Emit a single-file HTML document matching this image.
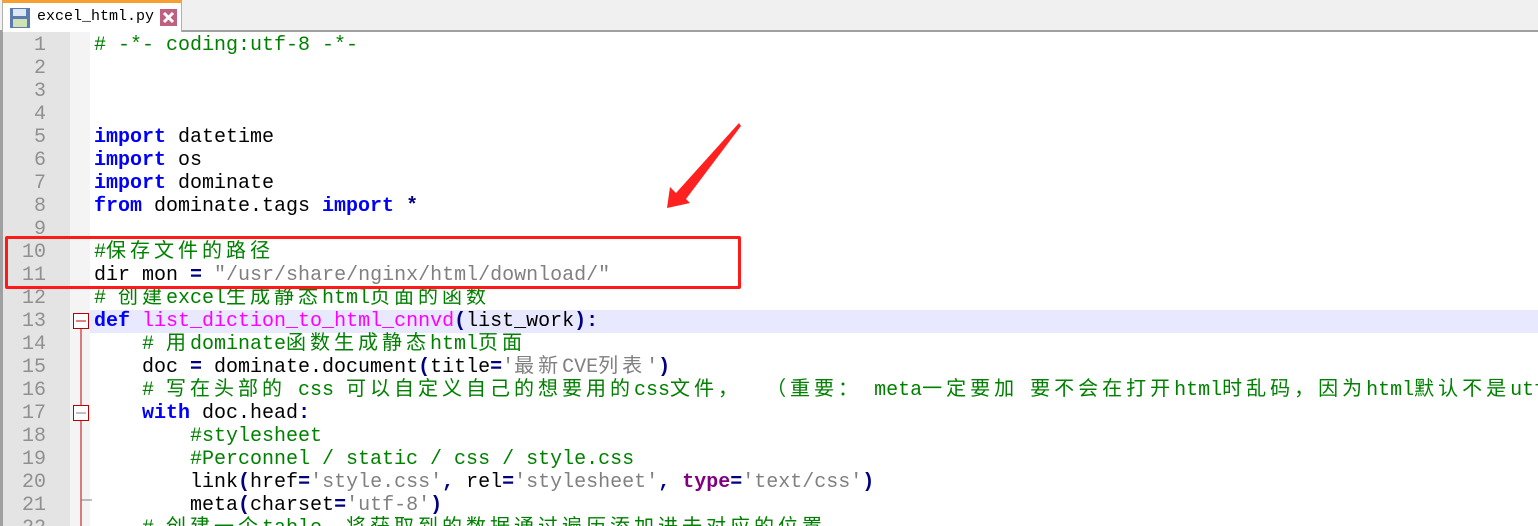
<!DOCTYPE html>
<html><head><meta charset="utf-8"><style>
html,body{margin:0;width:1538px;height:526px;overflow:hidden}
body{background:#fff;position:relative;font-family:"Liberation Mono","Noto Sans CJK SC",monospace}
.tabbar{position:absolute;left:0;top:0;width:1538px;height:32px;background:#f0f0f0;border-bottom:2px solid #a0a0a0;box-sizing:border-box}
.tab{position:absolute;left:2px;top:0;width:180px;height:32px;background:#fff;border:1px solid #b0b0b0;border-top:3px solid #f5a030;border-bottom:none;box-sizing:border-box}
.tab span{position:absolute;left:34px;top:5px;font-family:"Liberation Mono",monospace;font-size:15px;color:#000}
.gut{position:absolute;left:0;top:32px;width:70px;height:494px;background:#e4e4e4;border-left:3px solid #a0a0a0;box-sizing:border-box}
.fold{position:absolute;left:70px;top:32px;width:20px;height:494px;background:#f4f4f4}
.hl{position:absolute;left:90px;top:310px;width:1448px;height:23px;background:#e8e8ff}
.ln{position:absolute;left:0;width:46px;text-align:right;font-size:20px;color:#909090;line-height:23px}
.l{position:absolute;left:94px;font-size:20px;line-height:23px;white-space:pre;color:#000}
.c{letter-spacing:4px}
.cm{color:#008000}.kw{color:#0000ff;font-weight:bold}.fn{color:#ff00ff}.st{color:#808080}.op{color:#000080;font-weight:bold}
</style></head><body>
<div class="tabbar"><div class="tab">
<svg style="position:absolute;left:6px;top:4px" width="22" height="22"><rect x="1" y="1" width="20" height="20" fill="#5a7ab0"/><rect x="4" y="2" width="13" height="7" fill="#dde6f5"/><rect x="4" y="12" width="14" height="8" fill="#cfe3b0"/></svg>
<span>excel_html.py</span>
<svg style="position:absolute;left:157px;top:6px" width="17" height="17"><rect width="17" height="17" fill="#c06080"/><path d="M4 4L13 13M13 4L4 13" stroke="#fff" stroke-width="3"/></svg>
</div></div>
<div class="gut"></div><div class="fold"></div><div class="hl"></div>
<svg style="position:absolute;left:70px;top:310px" width="22" height="216">
<rect x="3.5" y="3.5" width="15" height="15" fill="#fff" stroke="#c00000"/><line x1="6" y1="11" x2="16" y2="11" stroke="#c00000"/>
<line x1="11" y1="19" x2="11" y2="216" stroke="#c00000"/>
<rect x="3.5" y="95.5" width="15" height="15" fill="#fff" stroke="#c00000"/><line x1="6" y1="103" x2="16" y2="103" stroke="#808080"/>
<line x1="11" y1="190" x2="22" y2="190" stroke="#808080"/>
</svg>
<div class="ln" style="top:34px">1</div><div class="ln" style="top:57px">2</div><div class="ln" style="top:80px">3</div><div class="ln" style="top:103px">4</div><div class="ln" style="top:126px">5</div><div class="ln" style="top:149px">6</div><div class="ln" style="top:172px">7</div><div class="ln" style="top:195px">8</div><div class="ln" style="top:218px">9</div><div class="ln" style="top:241px">10</div><div class="ln" style="top:264px">11</div><div class="ln" style="top:287px">12</div><div class="ln" style="top:310px">13</div><div class="ln" style="top:333px">14</div><div class="ln" style="top:356px">15</div><div class="ln" style="top:379px">16</div><div class="ln" style="top:402px">17</div><div class="ln" style="top:425px">18</div><div class="ln" style="top:448px">19</div><div class="ln" style="top:471px">20</div><div class="ln" style="top:494px">21</div><div class="ln" style="top:517px">22</div>
<div class="l cm" style="top:34px"># -*- coding:utf-8 -*-</div>
<div class="l" style="top:126px"><span class="kw">import</span> datetime</div>
<div class="l" style="top:149px"><span class="kw">import</span> os</div>
<div class="l" style="top:172px"><span class="kw">import</span> dominate</div>
<div class="l" style="top:195px"><span class="kw">from</span> dominate.tags <span class="kw">import</span> <span class="op">*</span></div>
<div class="l cm" style="top:241px">#<span class="c">保存文件的路径</span></div>
<div class="l" style="top:264px">dir mon <span class="op">=</span> <span class="st">"/usr/share/nginx/html/download/"</span></div>
<div class="l cm" style="top:287px"># <span class="c">创建</span>excel<span class="c">生成静态</span>html<span class="c">页面的函数</span></div>
<div class="l" style="top:310px"><span class="kw">def</span> <span class="fn">list_diction_to_html_cnnvd</span><span class="op">(</span>list_work<span class="op">):</span></div>
<div class="l cm" style="top:333px">    # <span class="c">用</span>dominate<span class="c">函数生成静态</span>html<span class="c">页面</span></div>
<div class="l" style="top:356px">    doc <span class="op">=</span> dominate.document<span class="op">(</span>title<span class="op">=</span><span class="st">'<span class="c">最新</span>CVE<span class="c">列表</span>'</span><span class="op">)</span></div>
<div class="l cm" style="top:379px">    # <span class="c">写在头部的</span> css <span class="c">可以自定义自己的想要用的</span>css<span class="c">文件，</span>  <span class="c">（重要：</span> meta<span class="c">一定要加</span> <span class="c">要不会在打开</span>html<span class="c">时乱码，因为</span>html<span class="c">默认不是</span>utf-8</div>
<div class="l" style="top:402px">    <span class="kw">with</span> doc.head<span class="op">:</span></div>
<div class="l cm" style="top:425px">        #stylesheet</div>
<div class="l cm" style="top:448px">        #Perconnel / static / css / style.css</div>
<div class="l" style="top:471px">        link<span class="op">(</span>href<span class="op">=</span><span class="st">'style.css'</span><span class="op">,</span> rel<span class="op">=</span><span class="st">'stylesheet'</span><span class="op">,</span> <span class="kw" style="color:#800080">type</span><span class="op">=</span><span class="st">'text/css'</span><span class="op">)</span></div>
<div class="l" style="top:494px">        meta<span class="op">(</span>charset<span class="op">=</span><span class="st">'utf-8'</span><span class="op">)</span></div>
<div class="l cm" style="top:517px">    # <span class="c">创建一个</span>table<span class="c">，将获取到的数据通过遍历添加进去对应的位置</span></div>
<div style="position:absolute;left:5px;top:236px;width:736px;height:53px;border:3px solid #ff1a1a;box-sizing:border-box;border-radius:2px"></div>
<svg style="position:absolute;left:0;top:0" width="1538" height="526"><polygon points="739,123 741,126 686,199 690,203 667,208 670,187 676,193" fill="#ff2020"/></svg>
</body></html>
